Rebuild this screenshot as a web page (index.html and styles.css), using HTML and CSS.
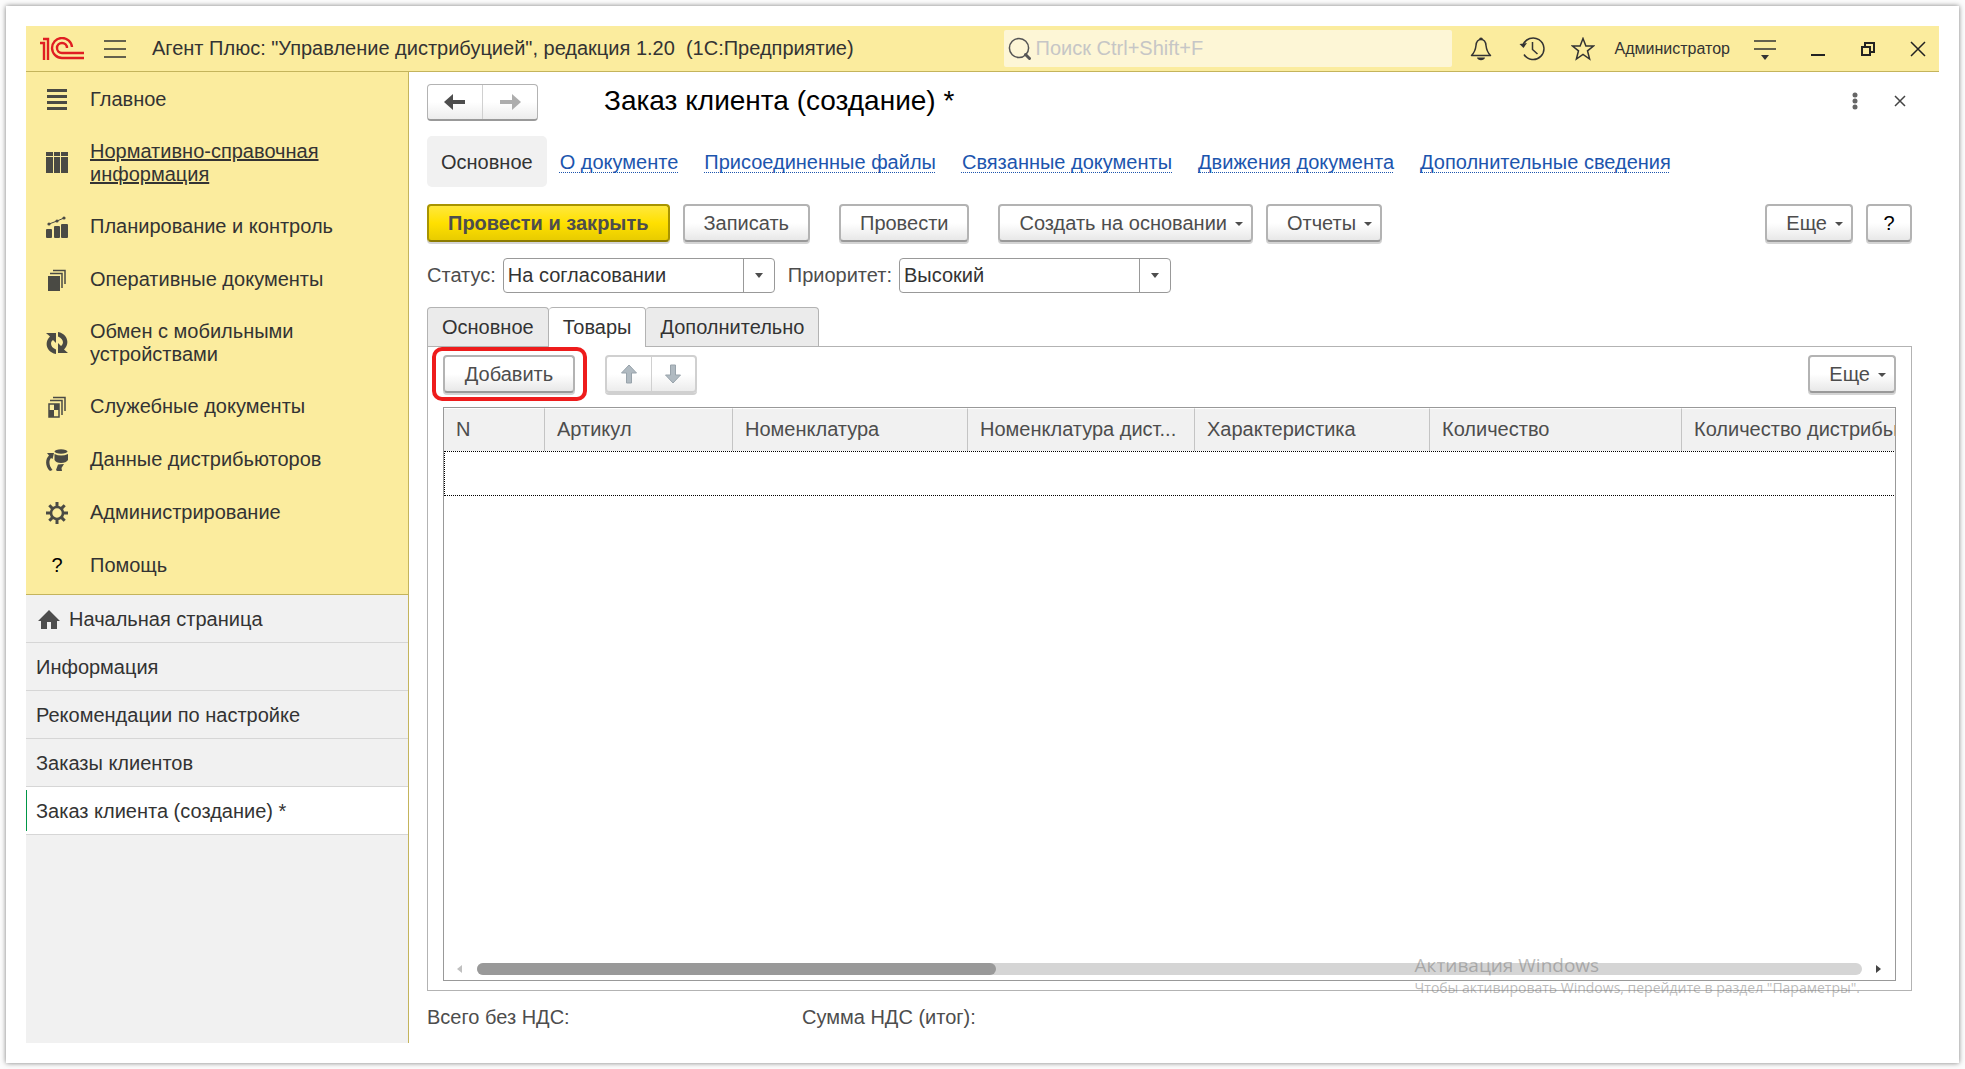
FILE: index.html
```html
<!DOCTYPE html>
<html lang="ru">
  <head>
    <meta charset="UTF-8" />
    <meta name="viewport" content="width=device-width, initial-scale=1.0" />
    <title>Заказ клиента (создание) *</title>
    <link rel="stylesheet" href="styles.css">
  </head>
  <body>
    <div class="sheet">
      <div class="app">
        <!-- title bar -->
        <header class="titlebar">
          <svg class="logo" width="46" height="24" viewBox="0 0 46 24" fill="none" stroke="#e01e22" stroke-width="2.4">
            <path d="M1 6H5V23M4 2H9V23" />
            <path d="M33 10A10 10 0 1 0 23 21H45" />
            <path d="M28 11A5 5 0 1 0 23 16H45" />
          </svg>
          <button class="icon-btn burger" aria-label="Меню">
            <svg width="22" height="20" viewBox="0 0 22 20" stroke="#333" stroke-width="1.4">
              <path d="M0 2H22M0 10H22M0 18H22" />
            </svg>
          </button>
          <span class="app-name">Агент Плюс: "Управление дистрибуцией", редакция 1.20&nbsp; (1С:Предприятие)</span>
          <label class="search">
            <svg width="24" height="24" viewBox="0 0 24 24" fill="none" stroke="#555">
              <circle cx="11" cy="11" r="9.6" stroke-width="1.5" />
              <path d="M17.500 17.500L21.500 21.500" stroke-width="3" stroke-linecap="round" />
            </svg>
            <input type="search" placeholder="Поиск Ctrl+Shift+F" aria-label="Поиск" />
          </label>
          <div class="tools">
            <button class="icon-btn" aria-label="Уведомления">
              <svg width="24" height="24" viewBox="0 0 24 24" fill="none" stroke="#333" stroke-width="1.5">
                <path d="M2.500 18.500C5.500 15.500 6.500 13 7 8.500C7.300 5 9 2.500 12 2.500S16.700 5 17 8.500C17.500 13 18.500 15.500 21.500 18.500Z" stroke-linejoin="round" />
                <path d="M10 2.500A2 2 0 0 1 14 2.500ZM8 20.500H16C15.500 24 8.500 24 8 20.500Z" fill="#333" stroke="none" />
              </svg>
            </button>
            <button class="icon-btn" aria-label="История">
              <svg width="26" height="24" viewBox="0 0 26 24" fill="none" stroke="#333" stroke-width="1.5">
                <path d="M4 8A10.800 10.800 0 1 1 5 17.500" />
                <path d="M13.500 5V12.500L18.500 17" />
                <path d="M0.500 7L8 6L4.500 11Z" fill="#333" stroke="none" />
              </svg>
            </button>
            <button class="icon-btn" aria-label="Избранное">
              <svg width="24" height="24" viewBox="0 0 24 24" fill="none" stroke="#333" stroke-width="1.5">
                <path d="M12 1.500L14.900 9H22.500L16.500 13.800L18.600 22L12 17.400L5.400 22L7.500 13.800L1.500 9H9.100Z" />
              </svg>
            </button>
          </div>
          <a class="user" href="#">Администратор</a>
          <div class="window-buttons">
            <button class="icon-btn" aria-label="Настройки">
              <svg width="22" height="24" viewBox="0 0 22 24" stroke="#333" stroke-width="1.5">
                <path d="M0 4H22M0 12H22" />
                <path d="M7 18H15L11 23Z" fill="#333" stroke="none" />
              </svg>
            </button>
            <button class="icon-btn" aria-label="Свернуть">
              <svg width="16" height="16" viewBox="0 0 16 16" stroke="#222" stroke-width="2">
                <path d="M1 14H15" />
              </svg>
            </button>
            <button class="icon-btn" aria-label="Восстановить">
              <svg width="16" height="16" viewBox="0 0 16 16" fill="none" stroke="#222" stroke-width="2">
                <path d="M2 6H10V14H2ZM5 5V2H14V11H11" />
              </svg>
            </button>
            <button class="icon-btn" aria-label="Закрыть">
              <svg width="16" height="16" viewBox="0 0 16 16" stroke="#222" stroke-width="1.5">
                <path d="M1 1L15 15M15 1L1 15" />
              </svg>
            </button>
          </div>
        </header>

        <div class="workspace">
          <!-- sections and opened windows -->
          <aside class="sidebar">
            <nav class="sections">
              <a href="#">
                <svg width="22" height="22" viewBox="0 0 22 22" fill="#4a4a44">
                  <path d="M1 0H21V3H1ZM1 6H21V9H1ZM1 12H21V15H1ZM1 18H21V21H1Z" />
                </svg>
                <span>Главное</span>
              </a>
              <a href="#" class="hovered">
                <svg width="22" height="22" viewBox="0 0 22 22" fill="#4a4a44">
                  <path d="M0 0H7V4H0ZM8 0H14V4H8ZM15 0H22V4H15ZM0 5H7V21H0ZM8 5H14V21H8ZM15 5H22V21H15Z" />
                </svg>
                <span>Нормативно-справочная информация</span>
              </a>
              <a href="#">
                <svg width="22" height="22" viewBox="0 0 22 22" fill="#4a4a44">
                  <rect x="0" y="13" width="6" height="9" rx="1" />
                  <rect x="8" y="10" width="6" height="12" rx="1" />
                  <rect x="15" y="8" width="7" height="14" rx="1" />
                  <path d="M3 8L11 5L18 2" stroke="#4a4a44" fill="none" />
                  <circle cx="3" cy="8" r="1.600" />
                  <circle cx="11" cy="5" r="1.600" />
                  <circle cx="18" cy="2" r="1.600" />
                </svg>
                <span>Планирование и контроль</span>
              </a>
              <a href="#">
                <svg width="22" height="22" viewBox="0 0 22 22" fill="#4a4a44">
                  <rect x="2" y="7" width="12" height="15" />
                  <path d="M4 4.500H16V19M7 1.500H19V15" fill="none" stroke="#4a4a44" stroke-width="1.500" />
                </svg>
                <span>Оперативные документы</span>
              </a>
              <a href="#">
                <svg width="22" height="22" viewBox="0 0 22 22" fill="#4a4a44">
                  <path d="M0 1H10V11L7 8C4 10 4 15 10 17.500V22C0 20 -2 10 4 4.500Z" />
                  <path d="M22 21H12V11L15 14C18 12 18 7 12 4.500V0C22 2 24 12 18 17.500Z" />
                </svg>
                <span>Обмен с мобильными устройствами</span>
              </a>
              <a href="#">
                <svg width="22" height="22" viewBox="0 0 22 22" fill="#4a4a44">
                  <path d="M4 4.500H16V19M7 1.500H19V15M3 8H13V21H3Z" fill="none" stroke="#4a4a44" stroke-width="1.500" />
                  <path d="M8 8H13V14H8ZM3 14H8V21H3Z" />
                </svg>
                <span>Служебные документы</span>
              </a>
              <a href="#">
                <svg width="22" height="22" viewBox="0 0 22 22" fill="#4a4a44">
                  <ellipse cx="15" cy="2.500" rx="6.500" ry="2.200" />
                  <path d="M8.500 5Q15 8 22 5V11Q20 14 15 14T8.500 11Z" />
                  <path d="M1 4H8L6.500 10L5 9C2.500 12 3 17 6.500 21L4 22C-1 18 -1 10 3 6.500Z" />
                  <path d="M18 15L12 15.500L10 21L11 22H16L15.500 19Z" />
                </svg>
                <span>Данные дистрибьюторов</span>
              </a>
              <a href="#">
                <svg width="22" height="22" viewBox="0 0 22 22" fill="none" stroke="#4a4a44">
                  <circle cx="11" cy="11" r="6" stroke-width="2.600" />
                  <path d="M11 0V4.500M11 17.500V22M0 11H4.500M17.500 11H22M3.300 3.300L6.400 6.400M15.600 15.600L18.700 18.700M3.300 18.700L6.400 15.600M15.600 6.400L18.700 3.300" stroke-width="3" />
                </svg>
                <span>Администрирование</span>
              </a>
              <a href="#">
                <span class="question">?</span>
                <span>Помощь</span>
              </a>
            </nav>
            <nav class="windows">
              <a href="#" class="home">
                <svg width="24" height="22" viewBox="0 0 24 22" fill="#4d4d4d">
                  <path d="M12 1L23 12H20V20H14V13H10V20H4V12H1Z" />
                </svg>
                Начальная страница
              </a>
              <a href="#">Информация</a>
              <a href="#">Рекомендации по настройке</a>
              <a href="#">Заказы клиентов</a>
              <a href="#" class="current">Заказ клиента (создание) *</a>
            </nav>
          </aside>

          <!-- document form -->
          <main class="form">
            <div class="form-head">
              <div class="history-buttons">
                <button aria-label="Назад">
                  <svg width="22" height="16" viewBox="0 0 22 16" fill="#4d4d4d">
                    <path d="M0 8L9 0V6H21V10H9V16Z" />
                  </svg>
                </button>
                <button aria-label="Вперед">
                  <svg width="22" height="16" viewBox="0 0 22 16" fill="#adadad">
                    <path d="M22 8L13 0V6H1V10H13V16Z" />
                  </svg>
                </button>
              </div>
              <h1>Заказ клиента (создание) *</h1>
              <button class="icon-btn" aria-label="Действия">
                <svg width="6" height="18" viewBox="0 0 6 18" fill="#666">
                  <circle cx="3" cy="3" r="2.500" />
                  <circle cx="3" cy="9" r="2.500" />
                  <circle cx="3" cy="15" r="2.500" />
                </svg>
              </button>
              <button class="icon-btn close-form" aria-label="Закрыть форму">
                <svg width="12" height="12" viewBox="0 0 12 12" stroke="#444" stroke-width="1.500">
                  <path d="M1 1L11 11M11 1L1 11" />
                </svg>
              </button>
            </div>

            <nav class="links">
              <span class="active">Основное</span>
              <a href="#">О документе</a>
              <a href="#">Присоединенные файлы</a>
              <a href="#">Связанные документы</a>
              <a href="#">Движения документа</a>
              <a href="#">Дополнительные сведения</a>
            </nav>

            <div class="commands">
              <button class="btn primary">Провести и закрыть</button>
              <button class="btn">Записать</button>
              <button class="btn apart">Провести</button>
              <button class="btn menu apart">Создать на основании</button>
              <button class="btn menu">Отчеты</button>
              <button class="btn menu more">Еще</button>
              <button class="btn help">?</button>
            </div>

            <div class="fields">
              <label for="status">Статус:</label>
              <div class="select">
                <select id="status">
                  <option>На согласовании</option>
                </select>
                <span class="arrow"></span>
              </div>
              <label for="priority">Приоритет:</label>
              <div class="select">
                <select id="priority">
                  <option>Высокий</option>
                </select>
                <span class="arrow"></span>
              </div>
            </div>

            <div class="tabs">
              <button>Основное</button>
              <button class="selected">Товары</button>
              <button>Дополнительно</button>
            </div>

            <section class="panel">
              <div class="panel-commands">
                <div class="marked">
                  <button class="btn">Добавить</button>
                </div>
                <div class="move-buttons">
                  <button disabled aria-label="Вверх">
                    <svg width="18" height="20" viewBox="0 0 18 20" fill="#b0bac1" stroke="#98a3ab">
                      <path d="M9 1L16.500 9H11.500V19H6.500V9H1.500Z" />
                    </svg>
                  </button>
                  <button disabled aria-label="Вниз">
                    <svg width="18" height="20" viewBox="0 0 18 20" fill="#b0bac1" stroke="#98a3ab">
                      <path d="M9 19L16.500 11H11.500V1H6.500V11H1.500Z" />
                    </svg>
                  </button>
                </div>
                <button class="btn menu more">Еще</button>
              </div>

              <div class="grid">
                <div class="grid-view">
                  <table>
                    <colgroup>
                      <col class="col-n" />
                      <col class="col-article" />
                      <col class="col-wide" />
                      <col class="col-partner" />
                      <col class="col-wide" />
                      <col class="col-count" />
                      <col class="col-last" />
                    </colgroup>
                    <thead>
                      <tr>
                        <th>N</th>
                        <th>Артикул</th>
                        <th>Номенклатура</th>
                        <th>Номенклатура дист...</th>
                        <th>Характеристика</th>
                        <th>Количество</th>
                        <th>Количество дистрибьютора</th>
                      </tr>
                    </thead>
                    <tbody>
                      <tr>
                        <td colspan="7"></td>
                      </tr>
                    </tbody>
                  </table>
                </div>
                <div class="scrollbar">
                  <span class="scroll-left"></span>
                  <div class="track"><div class="thumb"></div></div>
                  <span class="scroll-right"></span>
                </div>
              </div>
            </section>

            <div class="totals">
              <span>Всего без НДС:</span>
              <span>Сумма НДС (итог):</span>
            </div>
          </main>
        </div>
      </div>

      <!-- system notice over the form -->
      <div class="activation">
        <p class="activation-title">Активация Windows</p>
        <p>Чтобы активировать Windows, перейдите в раздел "Параметры".</p>
      </div>
    </div>
  </body>
</html>
```

FILE: styles.css
```css
:root {
  --yellow: #fbec9e;
  --yellow-line: #c4b45c;
  --grey: #f1f1f1;
  --line: #b3b3b3;
  --text: #333;
  --text-soft: #4d4d4d;
}

* {
  box-sizing: border-box;
}

body {
  margin: 0;
  padding: 6px;
  min-height: 100vh;
  display: flex;
  background: #fcfcfc;
  color: var(--text);
  font-family: "Liberation Sans", Arial, sans-serif;
  font-size: 20px;
  line-height: 23px;
}

a {
  color: inherit;
  text-decoration: none;
}

button,
input,
select {
  font: inherit;
  color: inherit;
  margin: 0;
}

svg {
  display: block;
  flex: none;
}

.sheet {
  position: relative;
  flex: 1;
  min-width: 0;
  display: flex;
  padding: 20px;
  background: #fff;
  box-shadow: 0 0 5px rgba(0, 0, 0, 0.5);
}

.app {
  flex: 1;
  min-width: 0;
  display: flex;
  flex-direction: column;
}

.icon-btn {
  padding: 0;
  border: 0;
  background: none;
}

/* ------- title bar */
.titlebar {
  display: flex;
  align-items: center;
  height: 46px;
  padding: 0 13px;
  background: var(--yellow);
  border-bottom: 1px solid var(--yellow-line);
}

.burger {
  margin-left: 19px;
}

.app-name {
  flex: 1;
  margin-left: 26px;
  white-space: nowrap;
}

.search {
  display: flex;
  align-items: center;
  gap: 4px;
  width: 448px;
  height: 37px;
  padding: 0 4px;
  border-radius: 2px;
  background: #fdf6d6;
}

.search input {
  flex: 1;
  min-width: 0;
  padding: 0;
  border: 0;
  outline: 0;
  background: none;
}

.search input::placeholder {
  color: #c6c6c6;
}

.tools {
  display: flex;
  gap: 26px;
  margin: 0 20px 0 17px;
}

.user {
  font-size: 16px;
}

.window-buttons {
  display: flex;
  align-items: center;
  gap: 34px;
  margin-left: 24px;
}

/* ------- sidebar */
.workspace {
  flex: 1;
  display: flex;
}

.sidebar {
  flex: none;
  width: 383px;
  background: var(--grey);
  border-right: 1px solid var(--yellow-line);
}

.sections {
  padding: 1px 0 2px;
  background: var(--yellow);
  border-bottom: 1px solid var(--yellow-line);
}

.sections a {
  display: flex;
  align-items: center;
  gap: 22px;
  min-height: 53px;
  padding: 14px 60px 14px 20px;
}

.sections .hovered {
  text-decoration: underline;
}

.question {
  width: 22px;
  color: #000;
  text-align: center;
}

.windows a {
  display: flex;
  align-items: center;
  gap: 8px;
  height: 48px;
  padding: 2px 0 0 10px;
  border-bottom: 1px solid #d6d6d6;
}

.windows .home {
  padding-left: 11px;
}

.windows .current {
  background: linear-gradient(#009646, #009646) 0 50% / 1px 41px no-repeat #fff;
}

/* ------- form */
.form {
  flex: 1;
  min-width: 0;
  display: flex;
  flex-direction: column;
  padding: 12px 27px 14px 18px;
}

.form-head {
  display: flex;
  align-items: center;
  height: 37px;
}

.form-head h1,
.form-head .icon-btn {
  padding-bottom: 3px;
}

.history-buttons {
  display: flex;
  width: 111px;
  height: 37px;
  border: 1px solid var(--line);
  border-bottom: 2px solid #999;
  border-radius: 4px;
  background: linear-gradient(#fff 50%, #ececec);
}

.history-buttons button {
  flex: 1;
  display: flex;
  align-items: center;
  justify-content: center;
  padding: 0;
  border: 0;
  background: none;
}

.history-buttons button + button {
  border-left: 1px solid #d0d0d0;
}

h1 {
  flex: 1;
  margin: 0 0 0 66px;
  color: #000;
  font-size: 28px;
  font-weight: normal;
  line-height: 30px;
}

.close-form {
  margin: 0 6px 0 36px;
}

.links {
  display: flex;
  align-items: center;
  margin-top: 15px;
  color: #1c55ae;
}

.links a,
.links span {
  padding: 15px 13px 13px;
}

.links a {
  text-decoration: underline dotted 1px;
  text-underline-offset: 3px;
  text-decoration-skip-ink: none;
}

.links .active {
  padding: 15px 14px 13px;
  border-radius: 5px;
  background: var(--grey);
  color: var(--text);
}

.commands {
  display: flex;
  gap: 13px;
  margin-top: 17px;
}

.btn {
  height: 38px;
  padding: 0 19px;
  border: 2px solid var(--line);
  border-bottom-color: #999;
  border-radius: 4px;
  background: linear-gradient(#fff 50%, #e8e8e8);
  box-shadow: 0 2px 0 #d4d4d4;
  color: var(--text-soft);
  white-space: nowrap;
}

.btn.primary {
  border-color: #a89400;
  border-bottom-color: #8c7b00;
  background: linear-gradient(#ffe83c, #ffe000 50%, #e8cc00);
  font-weight: bold;
}

.btn.apart {
  margin-left: 16px;
}

.btn.menu {
  display: flex;
  align-items: center;
  gap: 8px;
  padding-right: 8px;
}

.btn.menu::after {
  content: "";
  margin-top: 2px;
  border: 4px solid transparent;
  border-top: 4px solid var(--text-soft);
  border-bottom: 0;
}

.btn.more {
  margin-left: auto;
}

.btn.help {
  width: 46px;
  padding: 0;
  color: #000;
}

/* ------- status and priority */
.fields {
  display: flex;
  align-items: center;
  margin-top: 16px;
  color: var(--text-soft);
}

.fields label {
  margin-right: 7px;
}

.select {
  display: grid;
  grid-template-columns: 1fr 31px;
  width: 272px;
  height: 35px;
  margin-right: 13px;
  border: 1px solid #999;
  border-radius: 4px;
  color: var(--text);
}

.select select {
  grid-area: 1 / 1 / 2 / 3;
  appearance: none;
  padding: 0 36px 0 4px;
  border: 0;
  background: none;
}

.select .arrow {
  grid-area: 1 / 2;
  display: flex;
  align-items: center;
  justify-content: center;
  border-left: 1px solid #999;
  pointer-events: none;
}

.select .arrow::after {
  content: "";
  border: 4px solid transparent;
  border-top: 5px solid var(--text-soft);
  border-bottom: 0;
}

/* ------- tabs */
.tabs {
  display: flex;
  margin-top: 14px;
}

.tabs button {
  height: 39px;
  padding: 0 14px;
  border: 1px solid var(--line);
  border-bottom: 0;
  border-radius: 4px 4px 0 0;
  background: #ebebeb;
}

.tabs button + button {
  border-left: 0;
}

.tabs .selected {
  height: 40px;
  margin-bottom: -1px;
  background: #fff;
  z-index: 1;
}

.panel {
  flex: 1;
  display: flex;
  flex-direction: column;
  padding: 8px 15px 9px;
  border: 1px solid var(--line);
}

.panel-commands {
  display: flex;
  gap: 30px;
}

/* red frame round the add button */
.marked {
  position: relative;
}

.marked .btn {
  width: 132px;
}

.marked::before {
  content: "";
  position: absolute;
  inset: -8px -12px -8px -11px;
  border: 4px solid #ee1c1c;
  border-radius: 10px;
  pointer-events: none;
}

.move-buttons {
  display: flex;
  width: 92px;
  height: 38px;
  border: 2px solid #d0d0d0;
  border-radius: 4px;
  background: linear-gradient(#fff 50%, #ececec);
  box-shadow: 0 2px 0 #d0d0d0;
}

.move-buttons button {
  flex: 1;
  display: flex;
  align-items: center;
  justify-content: center;
  padding: 0;
  border: 0;
  background: none;
}

.move-buttons button + button {
  border-left: 1px solid #d0d0d0;
}

/* ------- goods table */
.grid {
  flex: 1;
  display: flex;
  flex-direction: column;
  margin-top: 14px;
  border: 1px solid #999;
}

.grid-view {
  flex: 1;
  display: grid;
  align-items: start;
  overflow: hidden;
}

table {
  width: 1540px;
  table-layout: fixed;
  border-collapse: separate;
  border-spacing: 0;
}

th {
  height: 43px;
  padding: 0 10px 2px 12px;
  overflow: hidden;
  border: solid #fff;
  border-width: 1px 1px 0 0;
  border-right: 1px solid #c4c4c4;
  background: var(--grey);
  color: var(--text-soft);
  font-weight: normal;
  text-align: left;
  text-overflow: ellipsis;
  white-space: nowrap;
}

td {
  height: 45px;
  border: 1px dotted #000;
}

.col-n {
  width: 101px;
}

.col-article {
  width: 188px;
}

.col-wide {
  width: 235px;
}

.col-partner {
  width: 227px;
}

.col-count {
  width: 252px;
}

.scrollbar {
  display: flex;
  align-items: center;
  height: 23px;
  padding: 0 14px 0 13px;
}

.track {
  flex: 1;
  height: 12px;
  margin: 0 14px 0 15px;
  border-radius: 6px;
  background: #d5d5d5;
}

.thumb {
  width: 37.5%;
  height: 12px;
  border-radius: 6px;
  background: #999;
}

.scroll-left,
.scroll-right {
  border: 4px solid transparent;
}

.scroll-left {
  border-left: 0;
  border-right: 5px solid #c0c0c0;
}

.scroll-right {
  border-right: 0;
  border-left: 5px solid #444;
}

.totals {
  display: grid;
  grid-template-columns: 375px 1fr;
  margin-top: 15px;
  color: var(--text-soft);
}

/* ------- activation notice */
.activation {
  position: absolute;
  right: 99px;
  bottom: 65px;
  color: rgba(120, 120, 120, 0.5);
  font-family: "Open Sans", "Noto Sans", sans-serif;
  font-size: 14px;
  line-height: 20px;
  pointer-events: none;
}

.activation p {
  margin: 0;
}

.activation .activation-title {
  font-size: 19px;
  line-height: 26px;
}
```
